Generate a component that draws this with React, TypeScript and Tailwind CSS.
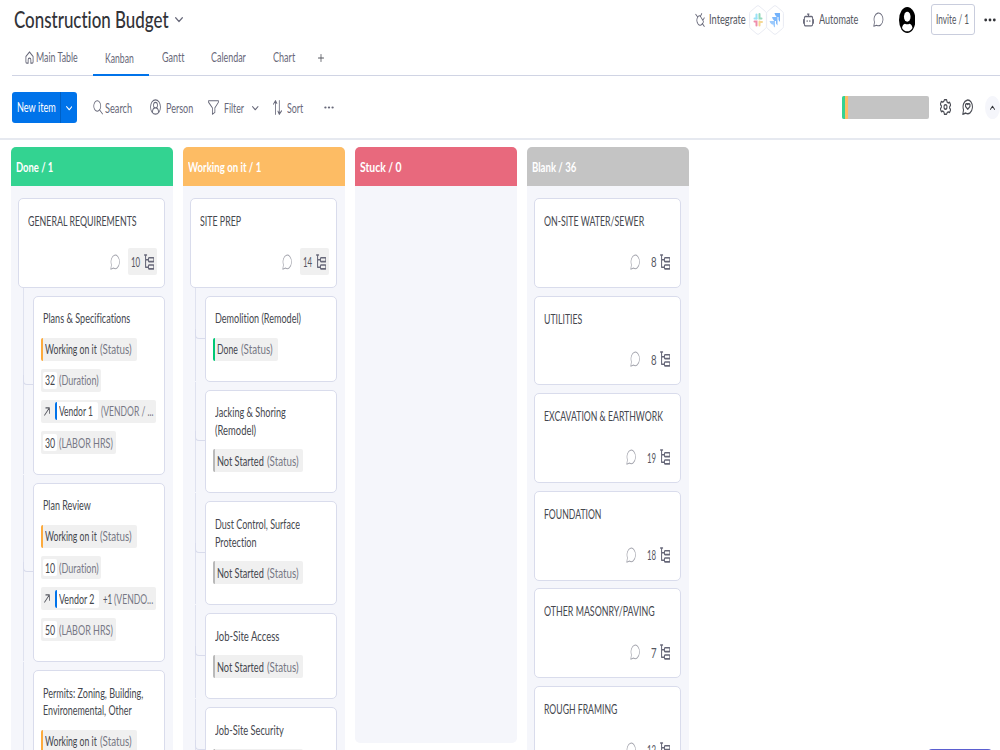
import React, { useLayoutEffect, useRef, useState } from "react";
import clsx from "clsx";

interface FitProps {
  children: React.ReactNode;
  /** Must carry a width, the text is condensed to fill it. */
  className: string;
}

const Fit = ({ children, className }: FitProps) => {
  const outer = useRef<HTMLSpanElement>(null);
  const inner = useRef<HTMLSpanElement>(null);
  const [scale, setScale] = useState(1);

  useLayoutEffect(() => {
    if (!outer.current || !inner.current) return;
    setScale(outer.current.getBoundingClientRect().width / inner.current.offsetWidth);
  }, [children]);

  return (
    <span ref={outer} className={clsx("flex shrink-0", className)}>
      <span
        ref={inner}
        className="inline-block shrink-0 origin-left whitespace-nowrap"
        style={{ transform: `scaleX(${scale})` }}>
        {children}
      </span>
    </span>
  );
};

interface IconProps {
  className: string;
  children: React.ReactNode;
  box?: string;
  stroke?: number;
}

const Icon = ({ className, children, box = "0 0 20 20", stroke = 1.5 }: IconProps) => (
  <svg
    viewBox={box}
    preserveAspectRatio="none"
    className={clsx("shrink-0", className)}
    fill="none"
    stroke="currentColor"
    strokeWidth={stroke}
    strokeLinecap="round"
    strokeLinejoin="round">
    {children}
  </svg>
);

const Chevron = ({ className, up = false }: { className: string; up?: boolean }) => (
  <Icon className={className} box="0 0 12 8" stroke={1.8}>
    <path d={up ? "M1 7l5-5 5 5" : "M1 1l5 5 5-5"} />
  </Icon>
);

const Bubble = ({ className, stroke = 1.5 }: { className: string; stroke?: number }) => (
  <Icon className={className} stroke={stroke}>
    <path d="M1.500 19l1.300-5.500A8.500 8.500 0 1 1 7 17.600z" />
  </Icon>
);

const Tree = () => (
  <Icon className="h-[16px] w-[10.500px] text-[#676879]" stroke={2}>
    <path d="M1 1.200h4M3 1.200v15.300h5.500M3 7.200h5.500" />
    <rect x="8.500" y="4.700" width="10.300" height="4.800" rx="1" />
    <rect x="8.500" y="13.800" width="10.300" height="4.800" rx="1" />
  </Icon>
);

const Dots = ({ className }: { className: string }) => (
  <svg viewBox="0 0 12 4" preserveAspectRatio="none" className={clsx("shrink-0", className)} fill="currentColor">
    <circle cx="1.700" cy="2" r="1.400" />
    <circle cx="6" cy="2" r="1.400" />
    <circle cx="10.300" cy="2" r="1.400" />
  </svg>
);

const Hexagon = ({ children }: { children: React.ReactNode }) => (
  <svg viewBox="0 0 18 30" preserveAspectRatio="none" className="h-[30px] w-[18px] shrink-0">
    <path
      d="M8 1Q9 .4 10 1l6.500 5.500q.9.8.9 2v13q0 1.200-.9 2L10 29q-1 .6-2 0l-6.500-5.500q-.9-.8-.9-2v-13q0-1.200.9-2z"
      fill="#fff"
      stroke="#e9ebf3"
    />
    {children}
  </svg>
);

const Header = () => (
  <header className="flex h-[39px] shrink-0 items-center pl-[14px]">
    <Fit className="-mt-[2px] w-[154.500px] text-[23px] leading-[30px] font-medium text-[#323338]">
      Construction Budget
    </Fit>
    <Chevron className="ml-[6px] h-[6px] w-[8px] text-[#676879]" />
    <div className="flex flex-1 items-center pl-[512px] text-[#676879]">
      <Icon className="h-[14px] w-[10px]" stroke={1.600}>
        <path d="M1.500 2l4 4M14.500 15l4 4M5.500 6q3-3.500 5.500-1l5 6q2 2-1.500 4.500-4.500 4-8.500 0Q1.500 10.500 5.500 6zM11 4.500L13.500 1M16 10l2.500-3" />
      </Icon>
      <Fit className="-mt-[2px] ml-[4.500px] w-[36.500px] text-[14px] text-[#55575f]">Integrate</Fit>
      <div className="ml-[3px] flex">
        <Hexagon>
          <g strokeWidth="2" strokeLinecap="round" opacity=".5">
            <path d="M7.500 9.500v4" stroke="#36c5f0" />
            <path d="M5.500 13.500h2" stroke="#36c5f0" />
            <path d="M10.500 9v4.500h2" stroke="#2eb67d" fill="none" />
            <path d="M5.500 16.500h2v4" stroke="#e01e5a" fill="none" />
            <path d="M10.500 16.500v4M10.500 17h2.500" stroke="#ecb22e" />
          </g>
        </Hexagon>
        <div className="-ml-px">
          <Hexagon>
            <path d="M8.500 8H14v9l-1.500-2v-3h-1.800q-1.800-1.500-2.200-4z" fill="#73b2fb" />
            <path d="M6 12h5.500v8.500l-1.500-2V16H8.300Q6.500 14.500 6 12z" fill="#7fb9fb" />
            <path d="M3.500 16H9v6.500q-1.600-.7-1.700-3H6Q4 18.500 3.500 16z" fill="#9bcafd" />
          </Hexagon>
        </div>
      </div>
      <Icon className="ml-[19px] h-[14px] w-[11px]" stroke={1.800}>
        <path d="M4.500 5h11q2 0 2 2v9q0 2.500-2.500 2.500H5Q2.500 18.500 2.500 16V7q0-2 2-2zM10 5V1.500M8 1.500h3M1 9.500v5M19 9.500v5M7.500 11v1M12.500 11v1" />
      </Icon>
      <Fit className="-mt-[2px] ml-[5.500px] w-[39.500px] text-[14px] text-[#55575f]">Automate</Fit>
      <Bubble className="ml-[14.500px] h-[15px] w-[10.500px]" />
      <svg viewBox="0 0 18 28" preserveAspectRatio="none" className="ml-[15px] h-[26px] w-[16.500px] shrink-0">
        <ellipse cx="9" cy="14" rx="9" ry="14" fill="#000" />
        <ellipse cx="9" cy="10.500" rx="3.600" ry="5.500" fill="#fff" />
        <path d="M3.300 22.500q.7-4 3.200-4.500 2.500 1.200 5 0 2.500.5 3.200 4.500-2.200 3.700-5.700 3.700t-5.700-3.700z" fill="#fff" />
      </svg>
      <div className="ml-[15.500px] flex h-[31px] w-[44px] shrink-0 items-center justify-center rounded-[3px] border border-[#c9cddd]">
        <Fit className="-mt-[2px] w-[33px] text-[14px] text-[#55575f]">Invite / 1</Fit>
      </div>
      <Dots className="ml-[9px] h-[4px] w-[12px] text-[#323338]" />
    </div>
  </header>
);

const Tabs = () => (
  <nav className="ml-[12px] flex h-[37px] shrink-0 items-center border-b border-[#d0d4e4] text-[14px] text-[#676879]">
    <Icon className="ml-[12.500px] h-[13px] w-[9px]" stroke={1.900}>
      <path d="M2 8.500l8-7 8 7v8.500q0 1.800-2 1.800h-3v-5.500q0-2.300-3-2.300t-3 2.300v5.500H4q-2 0-2-1.800z" />
    </Icon>
    <Fit className="-mt-[2px] ml-[2.500px] w-[41.500px]">Main Table</Fit>
    <div className="relative ml-[15.500px] flex h-[36px] w-[56px] items-center pl-[12px]">
      <Fit className="w-[29px]">Kanban</Fit>
      <div className="absolute inset-x-0 -bottom-px h-[2px] bg-[#0073ea]" />
    </div>
    <Fit className="-mt-[2px] ml-[12.500px] w-[22.500px]">Gantt</Fit>
    <Fit className="-mt-[2px] ml-[26.500px] w-[35px]">Calendar</Fit>
    <Fit className="-mt-[2px] ml-[27.500px] w-[22px]">Chart</Fit>
    <Icon className="ml-[22.500px] mt-[2px] h-[8px] w-[6px] text-[#55575f]" box="0 0 8 8" stroke={1.100}>
      <path d="M4 .5v7M.5 4h7" />
    </Icon>
  </nav>
);

const Toolbar = () => (
  <div className="flex h-[64px] shrink-0 items-center border-b-2 border-[#e6e9f0] pl-[12px] text-[14px] text-[#676879]">
    <button className="flex h-[31px] w-[65px] shrink-0 items-center rounded-[3px] bg-[#0073ea] text-white">
      <Fit className="-mt-[2px] ml-[5px] w-[38.500px]">New item</Fit>
      <span className="ml-[4.500px] h-full w-px bg-[#0060c4]" />
      <Chevron className="ml-[4.500px] mt-[2px] h-[5px] w-[6.500px]" />
    </button>
    <Icon className="ml-[15.500px] h-[15px] w-[10px]">
      <circle cx="8.500" cy="8" r="7" />
      <path d="M13.500 13.500l5.500 5" />
    </Icon>
    <Fit className="ml-[2.500px] w-[27px]">Search</Fit>
    <Icon className="ml-[18px] h-[16px] w-[11px]">
      <circle cx="10" cy="10" r="9" />
      <ellipse cx="10" cy="7.700" rx="3.600" ry="3.500" />
      <path d="M4.500 16.500q0-4.500 3.500-5M15.500 16.500q0-4.500-3.500-5" />
    </Icon>
    <Fit className="ml-[5px] w-[27px]">Person</Fit>
    <Icon className="ml-[15px] h-[15px] w-[11px]">
      <path d="M1 1h18v2l-6.500 7.500v6L8 19v-8.500L1 3z" />
    </Icon>
    <Fit className="ml-[5px] w-[20px]">Filter</Fit>
    <Chevron className="ml-[8px] mt-[2px] h-[5px] w-[6.500px]" />
    <Icon className="ml-[14px] h-[15px] w-[9px]" stroke={1.800}>
      <path d="M5.500 19V1M1 5.500L5.500 1l3 3.500M14 1v18M11 15l3 4 5-4.500" />
    </Icon>
    <Fit className="ml-[5px] w-[16.500px]">Sort</Fit>
    <Dots className="ml-[21px] h-[3px] w-[10px]" />
    <div className="ml-auto flex h-[23px] w-[87px] shrink-0 overflow-hidden rounded-[2px] bg-[#c4c4c4]">
      <div className="w-[2.500px] bg-[#33d391]" />
      <div className="w-[3px] bg-[#fdbc64]" />
    </div>
    <Icon className="ml-[11px] h-[16px] w-[11px] text-[#4b4d55]" stroke={1.900}>
      <path d="M8 1h4l.8 2.700 2 1.200 2.700-.8 2 3.500-2 2v1.800l2 2-2 3.400-2.700-.7-2 1.200L12 19H8l-.8-2.700-2-1.200-2.700.7-2-3.400 2-2V8.600l-2-2 2-3.500 2.700.8 2-1.200z" />
      <circle cx="10" cy="10" r="2.700" />
    </Icon>
    <div className="relative ml-[11px] flex shrink-0 text-[#4b4d55]">
      <Bubble className="h-[16px] w-[11px]" stroke={1.900} />
      <Icon className="absolute left-[3px] top-[4px] h-[7px] w-[5.500px]" box="0 0 10 10" stroke={2}>
        <path d="M5 9L1 5V2q2-2 4 0 2-2 4 0v3z" />
      </Icon>
    </div>
    <div className="ml-[12px] flex h-[23px] w-[15px] shrink-0 items-center justify-center rounded-[50%] bg-[#f5f6fb]">
      <Chevron up className="h-[5px] w-[5px] text-[#323338]" />
    </div>
  </div>
);

interface ItemProps {
  title: string;
  width: string;
  count: number;
  active?: boolean;
}

const ItemCard = ({ title, width, count, active = false }: ItemProps) => (
  <div className="flex h-[89.700px] w-[147px] shrink-0 flex-col rounded-[5px] border border-[#d9dcec] bg-white pl-[9.500px] pr-[7px] pt-[13px]">
    <Fit className={clsx("text-[14px] leading-[17.800px] text-[#45474e]", width)}>{title}</Fit>
    <div className="mt-[18.500px] flex items-center justify-end">
      <Bubble className="h-[16px] w-[10px] text-[#a2a3ac]" stroke={1.300} />
      <div
        className={clsx(
          "ml-[7.500px] flex h-[27px] items-center rounded-[2px] pl-[3.500px] pr-[2.500px] text-[#55575f]",
          active && "bg-[#f0f0f0]"
        )}>
        <Fit className={clsx("text-[14px]", count > 9 ? "w-[9px]" : "w-[5.500px]")}>{count}</Fit>
        <span className="w-[3.500px]" />
        <Tree />
      </div>
    </div>
  </div>
);

const statusStyles = {
  "Working on it": { bar: "bg-[#fdab3d]", box: "w-[96px]", text: "w-[52px]" },
  Done: { bar: "bg-[#00c875]", box: "w-[65px]", text: "w-[21px]" },
  "Not Started": { bar: "bg-[#b9b9b9]", box: "w-[90px]", text: "w-[46.500px]" }
};

type Status = keyof typeof statusStyles;

const chip = "flex h-[23px] items-center rounded-[2px] bg-[#f0f0f0] text-[14px] leading-[20px]";

const StatusChip = ({ status }: { status: Status }) => (
  <div className={clsx(chip, statusStyles[status].box)}>
    <span className={clsx("h-full w-[2.500px] rounded-l-[2px]", statusStyles[status].bar)} />
    <Fit className={clsx("ml-[2px] text-[#45474e]", statusStyles[status].text)}>{status}</Fit>
    <Fit className="ml-[3px] w-[31.500px] text-[#777885]">(Status)</Fit>
  </div>
);

interface NumberChipProps {
  value: number;
  label: string;
  box: string;
  width: string;
}

const NumberChip = ({ value, label, box, width }: NumberChipProps) => (
  <div className={clsx(chip, box)}>
    <div className="ml-[2.500px] flex h-[17px] w-[13.500px] items-center justify-center rounded-[2px] bg-white text-[#45474e]">
      <Fit className="w-[10px]">{value}</Fit>
    </div>
    <Fit className={clsx("ml-[2.500px] text-[#777885]", width)}>{label}</Fit>
  </div>
);

interface VendorProps {
  name: string;
  more?: boolean;
}

const VendorChip = ({ name, more = false }: VendorProps) => (
  <div className={clsx(chip, "w-[115px]")}>
    <Icon className="ml-[3.500px] h-[9px] w-[6px] text-[#55575f]" box="0 0 10 10" stroke={1.300}>
      <path d="M1 9l8-8M3 1h6v6" />
    </Icon>
    <span className="ml-[4.500px] h-[18px] w-[2.500px] rounded-l-[2px] bg-[#0073ea]" />
    <div
      className={clsx(
        "flex h-[18px] items-center rounded-r-[2px] bg-white pl-[2px] text-[#45474e]",
        more ? "w-[42px]" : "w-[41px]"
      )}>
      <Fit className={more ? "w-[35.500px]" : "w-[34px]"}>{name}</Fit>
    </div>
    {more ? (
      <>
        <Fit className="ml-[3.500px] w-[9px] text-[#55575f]">+1</Fit>
        <Fit className="ml-[2px] w-[39.500px] text-[#777885]">(VENDO...</Fit>
      </>
    ) : (
      <Fit className="ml-[3px] w-[52.500px] text-[#777885]">(VENDOR / ...</Fit>
    )}
  </div>
);

interface SubitemProps {
  lines: { text: string; width: string }[];
  status: Status;
  duration?: number;
  hours?: number;
  vendor?: VendorProps;
}

const SubitemCard = ({ lines, status, duration, hours, vendor }: SubitemProps) => (
  <div className="relative ml-[15px] w-[132px] shrink-0 rounded-[5px] border border-[#d9dcec] bg-white pb-[19.800px] pl-[7px] pt-[12.700px]">
    <div className="absolute -left-[11px] -top-[9px] bottom-0 w-px bg-[#dfe2ef]" />
    <div className="absolute -left-[11px] bottom-1/2 h-[10px] w-[10px] rounded-bl-[4px] border-b border-l border-[#d9dcec]" />
    {lines.map((line) => (
      <Fit key={line.text} className={clsx("ml-[2.500px] text-[14px] leading-[17.800px] text-[#45474e]", line.width)}>
        {line.text}
      </Fit>
    ))}
    <div className="mt-[10.700px] flex flex-col gap-[8.100px]">
      <StatusChip status={status} />
      {duration && <NumberChip value={duration} label="(Duration)" box="w-[60.500px]" width="w-[40px]" />}
      {vendor && <VendorChip {...vendor} />}
      {hours && <NumberChip value={hours} label="(LABOR HRS)" box="w-[75px]" width="w-[54px]" />}
    </div>
  </div>
);

interface ColumnProps {
  title: string;
  width: string;
  color: string;
  className?: string;
  children?: React.ReactNode;
}

const Column = ({ title, width, color, className = "h-[640px]", children }: ColumnProps) => (
  <section className={clsx("flex w-[162px] shrink-0 flex-col rounded-[5px] bg-[#f5f6fb]", className)}>
    <div
      className={clsx(
        "flex h-[39px] shrink-0 items-center rounded-t-[5px] pl-[5px] text-[14px] font-bold text-white",
        color
      )}>
      <Fit className={width}>{title}</Fit>
    </div>
    <div className="flex flex-col gap-[7.950px] pl-[7.400px] pt-[11.700px]">{children}</div>
  </section>
);

const blankItems: ItemProps[] = [
  { title: "ON-SITE WATER/SEWER", width: "w-[100px]", count: 8 },
  { title: "UTILITIES", width: "w-[38px]", count: 8 },
  { title: "EXCAVATION & EARTHWORK", width: "w-[119px]", count: 19 },
  { title: "FOUNDATION", width: "w-[57.500px]", count: 18 },
  { title: "OTHER MASONRY/PAVING", width: "w-[110.500px]", count: 7 },
  { title: "ROUGH FRAMING", width: "w-[73.500px]", count: 12 }
];

const Board = () => (
  <main className="flex min-h-0 flex-1 gap-[10px] pl-[10.600px] pt-[7.300px]">
    <Column title="Done / 1" width="w-[37px]" color="bg-[#33d391]">
      <ItemCard title="GENERAL REQUIREMENTS" width="w-[108.500px]" count={10} active />
      <SubitemCard
        lines={[{ text: "Plans & Specifications", width: "w-[87px]" }]}
        status="Working on it"
        duration={32}
        vendor={{ name: "Vendor 1" }}
        hours={30}
      />
      <SubitemCard
        lines={[{ text: "Plan Review", width: "w-[47.500px]" }]}
        status="Working on it"
        duration={10}
        vendor={{ name: "Vendor 2", more: true }}
        hours={50}
      />
      <SubitemCard
        lines={[
          { text: "Permits: Zoning, Building,", width: "w-[100px]" },
          { text: "Environemental, Other", width: "w-[88.500px]" }
        ]}
        status="Working on it"
        duration={10}
        vendor={{ name: "Vendor 1" }}
        hours={30}
      />
    </Column>
    <Column title="Working on it / 1" width="w-[73px]" color="bg-[#fdbc64]">
      <ItemCard title="SITE PREP" width="w-[41px]" count={14} active />
      <SubitemCard lines={[{ text: "Demolition (Remodel)", width: "w-[86px]" }]} status="Done" />
      <SubitemCard
        lines={[
          { text: "Jacking & Shoring", width: "w-[71px]" },
          { text: "(Remodel)", width: "w-[41px]" }
        ]}
        status="Not Started"
      />
      <SubitemCard
        lines={[
          { text: "Dust Control, Surface", width: "w-[85px]" },
          { text: "Protection", width: "w-[41.500px]" }
        ]}
        status="Not Started"
      />
      <SubitemCard lines={[{ text: "Job-Site Access", width: "w-[64.500px]" }]} status="Not Started" />
      <SubitemCard lines={[{ text: "Job-Site Security", width: "w-[69px]" }]} status="Not Started" />
    </Column>
    <Column title="Stuck / 0" width="w-[41.500px]" color="bg-[#e8697d]" className="h-[596px]" />
    <Column title="Blank / 36" width="w-[44.500px]" color="bg-[#c4c4c4]">
      {blankItems.map((item) => (
        <ItemCard key={item.title} {...item} />
      ))}
    </Column>
  </main>
);

export default function App() {
  return (
    <div className="relative flex h-[750px] w-[1000px] flex-col overflow-hidden bg-white font-['Lato',sans-serif] [font-variant-ligatures:none]">
      <Header />
      <Tabs />
      <Toolbar />
      <Board />
      {/* top edge of the help button, the rest is below the fold */}
      <div className="absolute left-[928px] top-[748.500px] h-[30px] w-[64px] rounded-[4px] bg-[#5b5fd0]" />
    </div>
  );
}
